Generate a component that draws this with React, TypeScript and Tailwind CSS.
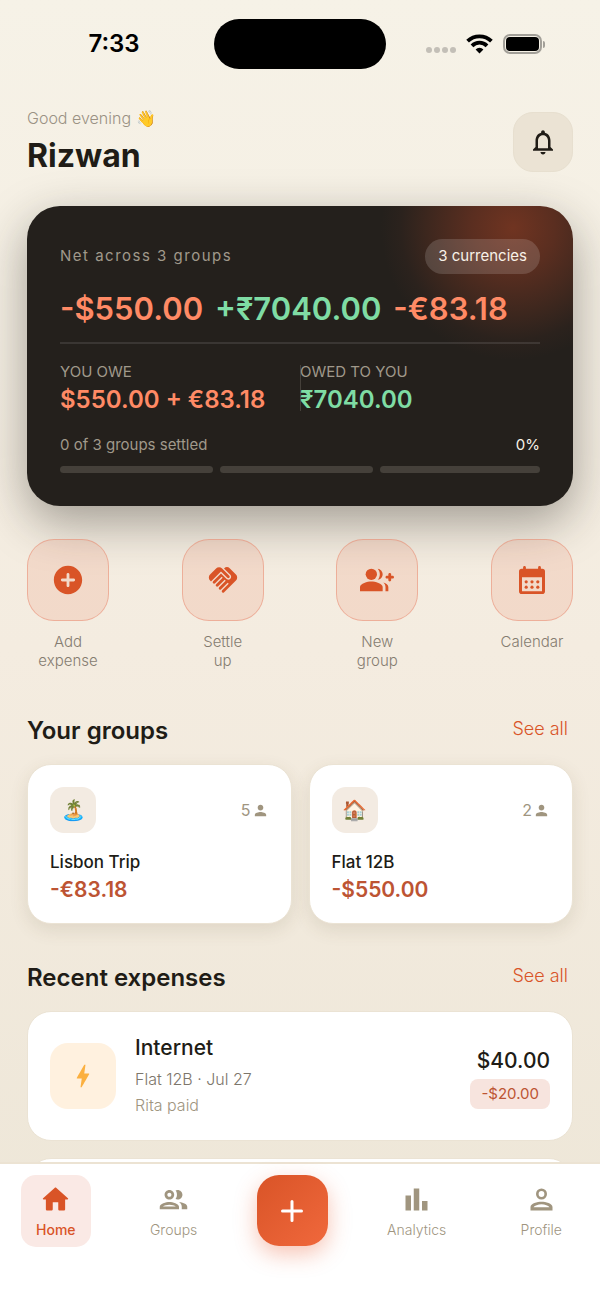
import type { ReactNode } from 'react';
import { MdBarChart, MdBolt, MdHandshake, MdNotificationsNone, MdPerson } from 'react-icons/md';

const HomeIcon = () => (
  <svg className="size-[33px]" viewBox="0 0 24 24" fill="currentColor" aria-hidden="true">
    <path d="M10 19v-5h4v5c0 .55.45 1 1 1h3c.55 0 1-.45 1-1v-7h1.7c.46 0 .68-.57.33-.87L12.67 3.6c-.38-.34-.96-.34-1.34 0l-8.36 7.53c-.34.3-.13.87.33.87H5v7c0 .55.45 1 1 1h3c.55 0 1-.45 1-1z" />
  </svg>
);

const GroupsIcon = () => (
  <svg className="size-[33px]" viewBox="0 0 24 24" fill="currentColor" aria-hidden="true">
    <path d="M9 13.75c-2.34 0-7 1.17-7 3.5V19h14v-1.75c0-2.33-4.66-3.5-7-3.5zM4.34 17c.84-.58 2.87-1.25 4.66-1.25s3.82.67 4.66 1.25H4.34zM9 12c1.93 0 3.5-1.57 3.5-3.5S10.93 5 9 5 5.5 6.57 5.5 8.5 7.07 12 9 12zm0-5c.83 0 1.5.67 1.5 1.5S9.83 10 9 10s-1.5-.67-1.5-1.5S8.17 7 9 7zm7.04 6.81c1.16.84 1.96 1.96 1.96 3.44V19h4v-1.75c0-2.02-3.5-3.17-5.96-3.44zM15 12c1.93 0 3.5-1.57 3.5-3.5S16.93 5 15 5c-.54 0-1.04.13-1.5.35.63.89 1 1.98 1 3.15s-.37 2.26-1 3.15c.46.22.96.35 1.5.35z" />
  </svg>
);

const ProfileIcon = () => (
  <svg className="size-[33px]" viewBox="0 0 24 24" fill="currentColor" fillRule="evenodd" aria-hidden="true">
    <path d="M12 4a4 4 0 1 0 0 8 4 4 0 0 0 0-8zm0 1.9a2.1 2.1 0 1 1 0 4.2 2.1 2.1 0 0 1 0-4.2z" />
    <path d="M12 13.6c-3 0-8 1.3-8 3.8V20h16v-2.6c0-2.5-5-3.8-8-3.8zm0 1.9c2.5 0 5 1 5.8 2.1H6.2c.8-1.1 3.3-2.1 5.8-2.1z" />
  </svg>
);

const AddCircleIcon = () => (
  <svg className="size-[34px]" viewBox="0 0 24 24" fill="currentColor" aria-hidden="true">
    <path d="M12 2C6.48 2 2 6.48 2 12s4.48 10 10 10 10-4.48 10-10S17.52 2 12 2zm4 11h-3v3c0 .55-.45 1-1 1s-1-.45-1-1v-3H8c-.55 0-1-.45-1-1s.45-1 1-1h3V8c0-.55.45-1 1-1s1 .45 1 1v3h3c.55 0 1 .45 1 1s-.45 1-1 1z" />
  </svg>
);

const GroupAddIcon = () => (
  <svg className="size-[34px]" viewBox="0 0 24 24" fill="currentColor" aria-hidden="true">
    <circle cx="8" cy="8" r="4" />
    <path d="M8 13c-2.67 0-8 1.34-8 4v3h16v-3c0-2.66-5.33-4-8-4z" />
    <path d="M12.51 4.05C13.43 5.11 14 6.49 14 8s-.57 2.89-1.49 3.95C14.47 11.7 16 10.04 16 8s-1.53-3.7-3.49-3.95z" />
    <path d="M16.53 13.83C17.42 14.66 18 15.7 18 17v3h2v-3c0-1.45-1.59-2.51-3.47-3.17z" />
    <path d="M22 9V8c0-.55-.45-1-1-1s-1 .45-1 1v1h-1c-.55 0-1 .45-1 1s.45 1 1 1h1v1c0 .55.45 1 1 1s1-.45 1-1v-1h1c.55 0 1-.45 1-1s-.45-1-1-1h-1z" />
  </svg>
);

const CalendarIcon = () => (
  <svg className="h-[28px] w-[26px]" viewBox="0 0 26 28" fill="currentColor" fillRule="evenodd" aria-hidden="true">
    <path d="M5.5 0c.8 0 1.4.6 1.4 1.4v1.4h12.2V1.4a1.4 1.4 0 0 1 2.8 0v1.4h1.3A2.8 2.8 0 0 1 26 5.6v19.6a2.8 2.8 0 0 1-2.8 2.8H2.8A2.8 2.8 0 0 1 0 25.2V5.6a2.8 2.8 0 0 1 2.8-2.8h1.3V1.4C4.1.6 4.7 0 5.5 0zM3 11.2v14h20v-14z" />
    <circle cx="7.2" cy="15.8" r="1.6" />
    <circle cx="13" cy="15.8" r="1.6" />
    <circle cx="18.8" cy="15.8" r="1.6" />
    <circle cx="7.2" cy="21.2" r="1.6" />
    <circle cx="13" cy="21.2" r="1.6" />
    <circle cx="18.8" cy="21.2" r="1.6" />
  </svg>
);

const WifiIcon = () => (
  <svg className="h-[20px] w-[27px]" viewBox="0 0 27 20" fill="none" stroke="#000" strokeWidth="3.8" aria-hidden="true">
    <path d="M1.6 7.2a17 17 0 0 1 23.8 0" />
    <path d="M6 11.8a10.6 10.6 0 0 1 15 0" />
    <path d="M13.5 19.4l-3.9-4a5.5 5.5 0 0 1 7.8 0z" fill="#000" stroke="none" />
  </svg>
);

const StatusBar = () => (
  <div className="grid h-[88px] grid-cols-3 items-center text-black">
    <div className="pl-[28px] text-center text-2xl font-semibold">7:33</div>
    <div className="h-[50px] w-[172px] justify-self-center rounded-full bg-black" />
    <div className="flex items-center gap-[10px] justify-self-end pr-[55px]">
      <div className="flex gap-[2px] pt-3">
        {[0, 1, 2, 3].map(i => (
          <span key={i} className="size-[6px] rounded-full bg-[#c3bfb7]" />
        ))}
      </div>
      <WifiIcon />
      <div className="flex items-center gap-px">
        <div className="h-[20px] w-[39px] rounded-[7px] border-2 border-[#a29f98] p-px">
          <div className="h-full rounded-[4px] bg-black" />
        </div>
        <div className="h-[7px] w-[2px] rounded-r-full bg-[#a29f98]" />
      </div>
    </div>
  </div>
);

const BalanceCard = () => (
  <section className="mt-7 rounded-[33px] bg-[#24201c] bg-[radial-gradient(circle_132px_at_calc(100%-60px)_22px,#703421_0%,#5a2e20_32%,#3d271e_65%,#2b221d_85%,#24201c_100%)] p-[33px] shadow-[0_16px_48px_rgba(36,32,28,0.4)]">
    <div className="flex items-center justify-between">
      <h2 className="text-[15px] tracking-widest text-[#a0998b]">Net across 3 groups</h2>
      <span className="flex h-[35px] items-center rounded-full bg-white/15 px-[13px] text-[15px] text-[#f8f2e8]">
        3 currencies
      </span>
    </div>
    <div className="mt-[11px] flex gap-3 text-[31px] leading-[48px] font-semibold whitespace-nowrap">
      <span className="text-[#ff8a65]">-$550.00</span>
      <span className="text-[#7fdca4]">+₹7040.00</span>
      <span className="text-[#ff8a65]">-€83.18</span>
    </div>
    <div className="mt-[9px] grid grid-cols-2 border-t-2 border-white/10 pt-4">
      <div>
        <div className="text-[15px] leading-6 text-[#a0998b]">YOU OWE</div>
        <div className="text-2xl font-semibold text-[#ff8a65]">$550.00 + €83.18</div>
      </div>
      <div className="bg-[linear-gradient(#45403a,#45403a)] bg-[length:1px_46px] bg-left bg-no-repeat">
        <div className="text-[15px] leading-6 text-[#a0998b]">OWED TO YOU</div>
        <div className="text-2xl font-semibold text-[#7fdca4]">₹7040.00</div>
      </div>
    </div>
    <div className="mt-[17px] flex justify-between text-[15px] leading-6 text-[#a0998b]">
      <span>0 of 3 groups settled</span>
      <span className="text-[#f8f2e8]">0%</span>
    </div>
    <div className="mt-[9px] grid grid-cols-3">
      {[0, 1, 2].map(i => (
        <div key={i} className="mr-[7px] h-[7px] rounded-full bg-[#45403a] last:mr-0" />
      ))}
    </div>
  </section>
);

const QuickAction = ({ icon, label }: { icon: ReactNode; label: string }) => (
  <button className="flex w-[82px] flex-col items-center">
    <span className="flex size-[82px] items-center justify-center rounded-[27px] border border-[#e8836a]/50 bg-[#e8552b]/12 text-[#d95427]">
      {icon}
    </span>
    <span className="mt-[11px] w-min text-[15px] leading-[19px] font-light text-[#857c70]">{label}</span>
  </button>
);

const SectionHeader = ({ title }: { title: string }) => (
  <div className="mb-[17px] flex items-center justify-between">
    <h2 className="text-2xl font-semibold">{title}</h2>
    <a href="#" className="pr-[5px] pb-1 text-lg font-light text-[#d95427]">
      See all
    </a>
  </div>
);

type GroupCardProps = { icon: string; members: number; name: string; balance: string };

const GroupCard = ({ icon, members, name, balance }: GroupCardProps) => (
  <a
    href="#"
    className="rounded-[24px] border border-[#ebe3d4] bg-white px-[22px] pt-[22px] pb-[18px] shadow-[0_6px_18px_rgba(90,70,40,0.12)]">
    <div className="flex items-center justify-between">
      <span className="flex size-[46px] items-center justify-center rounded-[14px] bg-[#f3ebe2] text-xl">{icon}</span>
      <span className="flex items-center gap-px text-base text-[#a0957f]">
        {members}
        <MdPerson className="size-[17px]" />
      </span>
    </div>
    <div className="mt-[16px] text-[17px] leading-[26px] font-medium">{name}</div>
    <div className="text-[21px] leading-[30px] font-semibold text-[#bd5433]">{balance}</div>
  </a>
);

const NavItem = ({ icon, label, active = false }: { icon: ReactNode; label: string; active?: boolean }) => (
  <button
    aria-current={active ? 'page' : undefined}
    className={`flex h-[72px] flex-col items-center justify-center gap-1 rounded-[15px] px-[15px] ${
      active ? 'bg-[#fae9e5] text-[#d95427]' : 'text-[#a0957f]'
    }`}>
    {icon}
    <span className={`text-sm leading-5 ${active ? 'font-medium' : 'font-light'}`}>{label}</span>
  </button>
);

const App = () => {
  return (
    <div className="flex h-screen flex-col bg-gradient-to-b from-[#f6f2e7] via-[#f4ece0] to-[#ede6d7] font-[Inter,sans-serif] text-[#201c16]">
      <main className="flex-1 overflow-y-auto [scrollbar-width:none]">
        <StatusBar />
        <div className="px-[27px] pt-[18px] pb-6">
          <header className="flex items-center justify-between">
            <div>
              <p className="text-base font-light text-[#9a9184]">Good evening 👋</p>
              <h1 className="mt-1 text-[32px] leading-[44px] font-bold">Rizwan</h1>
            </div>
            <button
              aria-label="Notifications"
              className="flex size-[60px] items-center justify-center rounded-[20px] border border-[#e7dfcf] bg-[#ebe3d4]">
              <MdNotificationsNone className="size-[30px]" />
            </button>
          </header>

          <BalanceCard />

          <div className="mt-[33px] flex items-start justify-between">
            <QuickAction icon={<AddCircleIcon />} label="Add expense" />
            <QuickAction icon={<MdHandshake className="size-[34px]" />} label="Settle up" />
            <QuickAction icon={<GroupAddIcon />} label="New group" />
            <QuickAction icon={<CalendarIcon />} label="Calendar" />
          </div>

          <section className="mt-[45px]">
            <SectionHeader title="Your groups" />
            <div className="grid grid-cols-2 gap-[17px]">
              <GroupCard icon="🏝️" members={5} name="Lisbon Trip" balance="-€83.18" />
              <GroupCard icon="🏠" members={2} name="Flat 12B" balance="-$550.00" />
            </div>
          </section>

          <section className="mt-[38px]">
            <SectionHeader title="Recent expenses" />
            <ul className="flex flex-col gap-[17px]">
              <li className="flex items-center rounded-[24px] border border-[#ebe3d4] bg-white px-[22px] py-[21px]">
                <span className="flex size-[66px] items-center justify-center rounded-[18px] bg-[#fff1df] text-[#fbb040]">
                  <MdBolt className="size-[30px]" />
                </span>
                <div className="ml-[19px] flex-1">
                  <div className="text-[21px] leading-[30px] font-medium">Internet</div>
                  <div className="mt-[3px] text-base leading-[26px] font-light text-[#7d766b]">Flat 12B · Jul 27</div>
                  <div className="text-base leading-[27px] font-light text-[#a0957f]">Rita paid</div>
                </div>
                <div className="flex flex-col items-end">
                  <div className="text-[21px] leading-9 font-medium">$40.00</div>
                  <div className="rounded-lg bg-[#f7e4de] px-[11px] text-[15px] leading-[30px] text-[#bd5433]">
                    -$20.00
                  </div>
                </div>
              </li>
              <li className="h-[129px] rounded-[24px] border border-[#ebe3d4] bg-white" />
            </ul>
          </section>
        </div>
      </main>

      <nav className="flex h-[142px] shrink-0 items-start justify-between border-t-2 border-[#ece3d3] bg-white pt-[11px] pr-[23px] pl-[21px]">
        <NavItem icon={<HomeIcon />} label="Home" active />
        <NavItem icon={<GroupsIcon />} label="Groups" />
        <button
          aria-label="Add"
          className="flex size-[71px] items-center justify-center rounded-[22px] bg-gradient-to-br from-[#d95427] to-[#f0683c] text-white shadow-[0_8px_22px_rgba(232,85,43,0.35)]">
          <svg className="size-[22px]" viewBox="0 0 22 22" stroke="currentColor" strokeWidth="3" strokeLinecap="round" aria-hidden="true">
            <path d="M11 1.5v19M1.5 11h19" />
          </svg>
        </button>
        <NavItem icon={<MdBarChart className="size-[33px]" />} label="Analytics" />
        <NavItem icon={<ProfileIcon />} label="Profile" />
      </nav>
    </div>
  );
};

export default App;
